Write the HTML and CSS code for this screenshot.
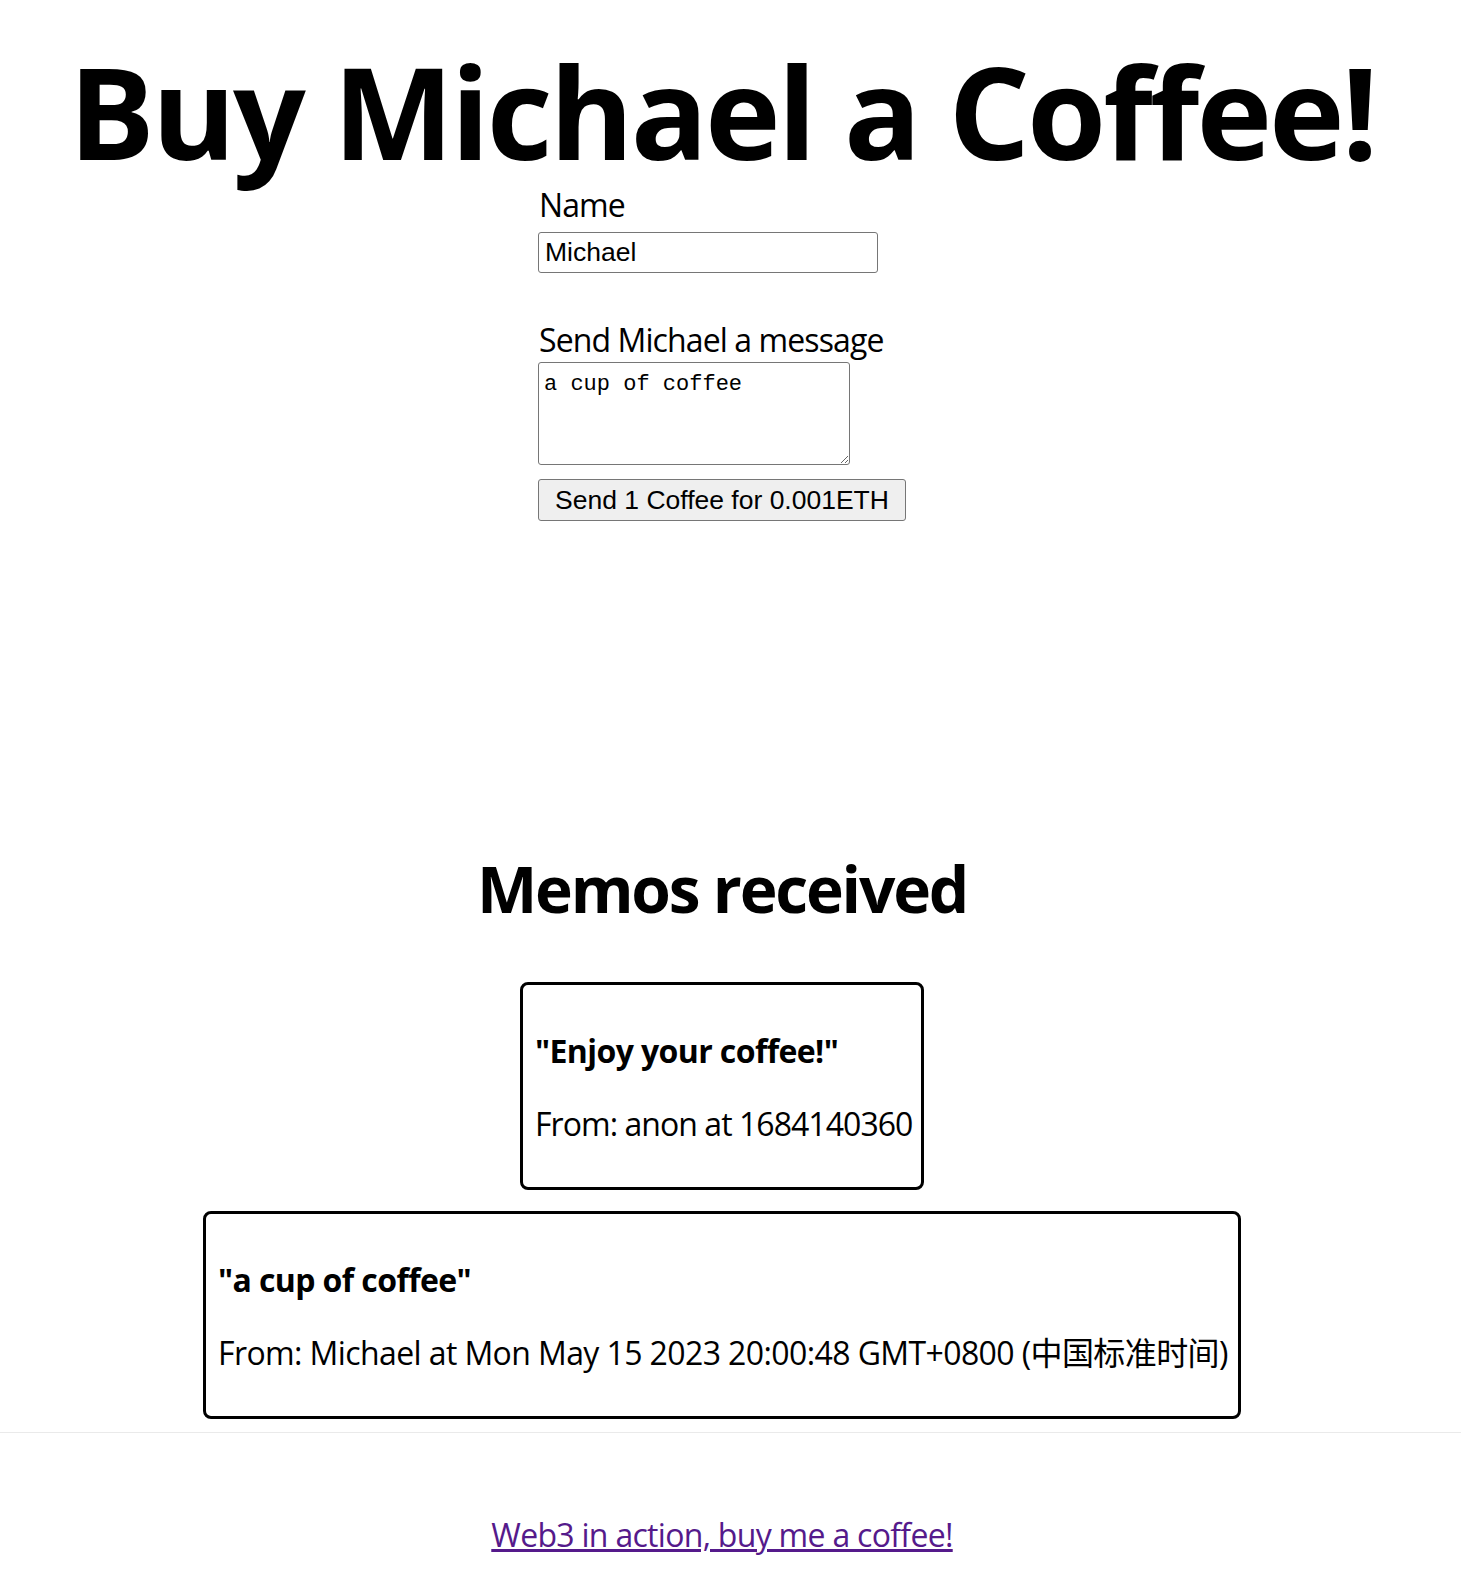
FILE: index.html
```html
<!DOCTYPE html>
<html lang="en">
<head>
<meta charset="utf-8">
<title>Buy Michael a Coffee!</title>
<link rel="stylesheet" href="styles.css">
</head>
<body>
<main class="main">
  <h1 class="title">Buy Michael a Coffee!</h1>
  <form class="form">
    <label class="label" for="name">Name</label>
    <input class="input" id="name" type="text" value="Michael">
    <label class="label label-msg" for="message">Send Michael a message</label>
    <textarea class="textarea" id="message">a cup of coffee</textarea>
    <button class="button" type="button">Send 1 Coffee for 0.001ETH</button>
  </form>
  <h2 class="memos-title">Memos received</h2>
  <div class="card card-small">
    <h3 class="card-msg">"Enjoy your coffee!"</h3>
    <p class="card-from">From: anon at 1684140360</p>
  </div>
  <div class="card card-wide">
    <h3 class="card-msg">"a cup of coffee"</h3>
    <p class="card-from">From: Michael at Mon May 15 2023 20:00:48 GMT+0800 (中国标准时间)</p>
  </div>
</main>
<footer class="footer">
  <a class="footer-link" href="#">Web3 in action, buy me a coffee!</a>
</footer>
</body>
</html>
```
FILE: styles.css
```css
html, body {
  margin: 0;
  padding: 0;
  background: #fff;
  color: #000;
  font-family: "Open Sans", "Noto Sans CJK SC", sans-serif;
}

.main {
  display: flex;
  flex-direction: column;
  align-items: center;
  padding-right: 17px;
}

.title {
  margin: 40px 0 0;
  font-size: 128px;
  font-weight: 700;
  line-height: 142px;
  letter-spacing: -3px;
  white-space: nowrap;
}

.form {
  display: flex;
  flex-direction: column;
  align-items: flex-start;
  width: 368px;
  margin-top: 2px;
}

.label {
  display: block;
  font-size: 32px;
  line-height: 42px;
  letter-spacing: -0.9px;
  padding-left: 1px;
}

.label-msg {
  margin-top: 46px;
}

.input {
  box-sizing: border-box;
  margin-top: 6px;
  width: 340px;
  height: 41px;
  padding: 0 6px;
  border: 1px solid #767676;
  border-radius: 3px;
  font-family: "Liberation Sans", Arial, sans-serif;
  font-size: 26.5px;
  color: #000;
}

.textarea {
  box-sizing: border-box;
  margin-top: 1px;
  width: 312px;
  height: 103px;
  padding: 9px 5px 2px;
  border: 1px solid #767676;
  border-radius: 3px;
  font-family: "Liberation Mono", "Courier New", monospace;
  font-size: 22px;
  color: #000;
  resize: both;
}

.button {
  box-sizing: border-box;
  margin-top: 14px;
  width: 368px;
  height: 42px;
  padding: 0 10px;
  border: 1px solid #767676;
  border-radius: 3px;
  background: #efefef;
  font-family: "Liberation Sans", Arial, sans-serif;
  font-size: 26.5px;
  color: #000;
}

.memos-title {
  margin: 325px 0 0;
  font-size: 64px;
  font-weight: 700;
  line-height: 85px;
  letter-spacing: -2.2px;
}

.card {
  box-sizing: border-box;
  border: 3px solid #000;
  border-radius: 8px;
  padding: 12px;
}

.card-small {
  width: 404px;
  margin-top: 51px;
}

.card-wide {
  width: 1038px;
  margin-top: 21px;
}

.card-msg {
  margin: 32px 0 0;
  font-size: 32px;
  font-weight: 700;
  line-height: 43px;
  letter-spacing: -0.6px;
  white-space: nowrap;
}

.card-from {
  margin: 30px 0;
  font-size: 32px;
  line-height: 43px;
  letter-spacing: -0.6px;
  white-space: nowrap;
}

.card-small .card-from {
  letter-spacing: -0.95px;
}

.footer {
  display: flex;
  justify-content: center;
  margin-top: 13px;
  padding: 80px 17px 40px 0;
  border-top: 1px solid #eaeaea;
}

.footer-link {
  font-size: 32px;
  line-height: 43px;
  letter-spacing: -0.7px;
  color: #551a8b;
  text-decoration: underline;
}
```
